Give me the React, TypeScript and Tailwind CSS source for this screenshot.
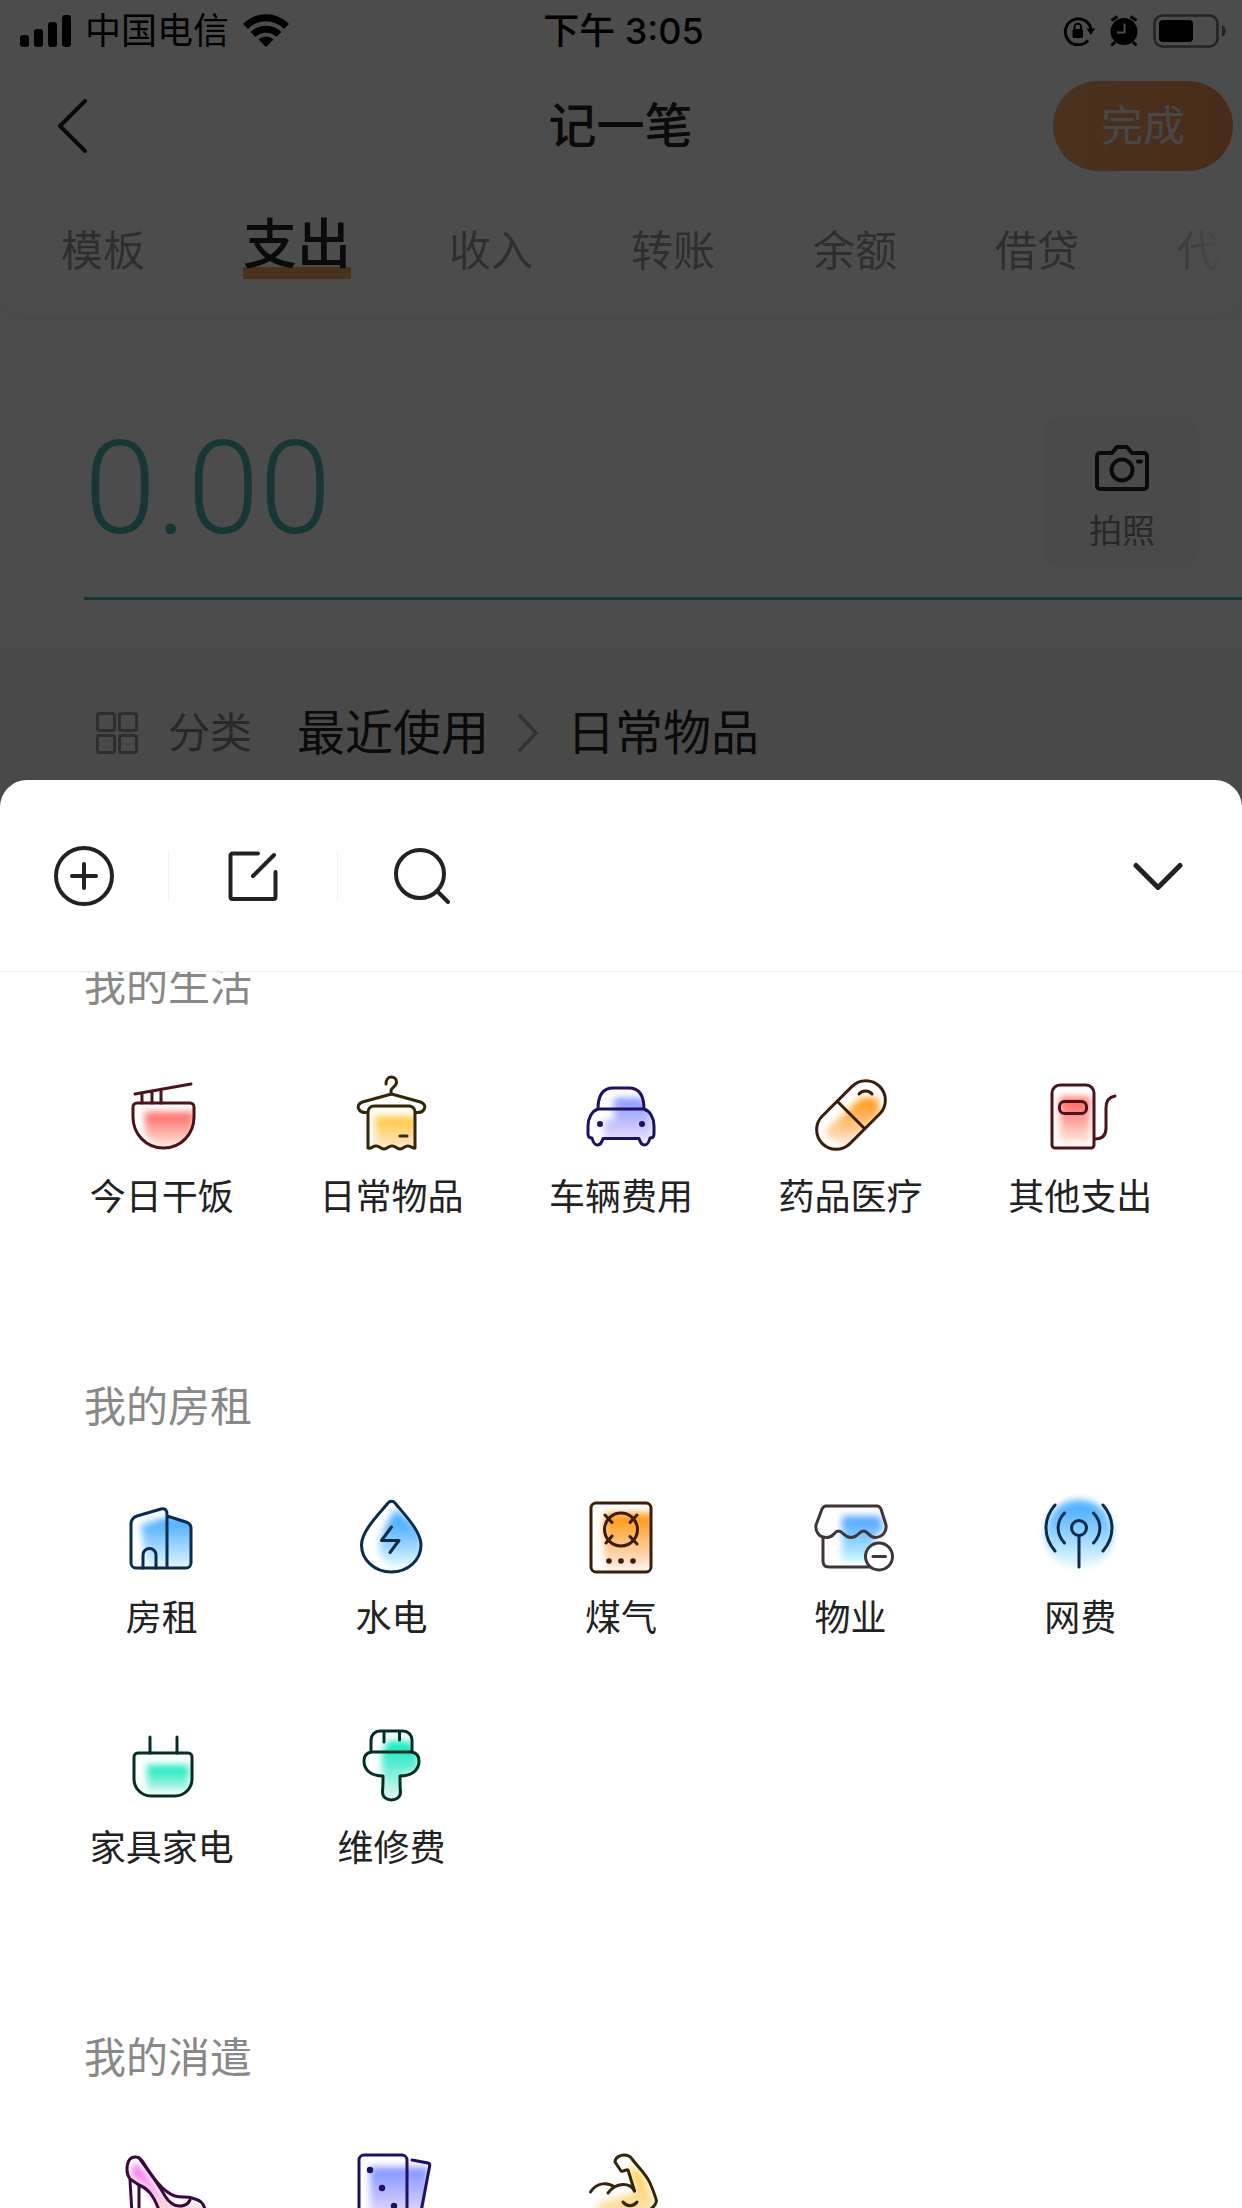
import React, { useId, useState } from 'react';

type Tone = { line: string; from: string; to: string };

const tones: Record<string, Tone> = {
  red: { line: '#4a141c', from: '#ff6f6a', to: '#fff0e2' },
  yellow: { line: '#33260a', from: '#ffcb45', to: '#ffe9d6' },
  violet: { line: '#1f1060', from: '#8496ff', to: '#ecdffd' },
  orange: { line: '#3b1d0c', from: '#ff9c1a', to: '#ffe8dc' },
  blue: { line: '#0c2c4c', from: '#52b1ff', to: '#e4f9ff' },
  shop: { line: '#3f3638', from: '#4da3ff', to: '#c4f6ff' },
  green: { line: '#052f26', from: '#1de9c3', to: '#d2f6f0' },
  pink: { line: '#380a3c', from: '#f56bea', to: '#ffe0dc' },
};

type TintIconProps = {
  tone: keyof typeof tones;
  outline?: React.ReactNode;
  glow: React.ReactNode;
  y1?: number;
  y2?: number;
  children: React.ReactNode;
};

// line icon with a soft colour patch behind the strokes
const TintIcon = ({ tone, outline, glow, y1 = 20, y2 = 80, children }: TintIconProps) => {
  const id = useId();
  const { line, from, to } = tones[tone];
  return (
    <svg viewBox="0 0 90 90" className="size-[90px] overflow-visible" fill="none" aria-hidden="true">
      <defs>
        <linearGradient id={`${id}g`} gradientUnits="userSpaceOnUse" x1="0" y1={y1} x2="0" y2={y2}>
          <stop offset="0" stopColor={from} />
          <stop offset="1" stopColor={to} />
        </linearGradient>
        <filter id={`${id}b`} x="-30%" y="-30%" width="160%" height="160%">
          <feGaussianBlur stdDeviation="3.5" />
        </filter>
        {outline && <clipPath id={`${id}c`}>{outline}</clipPath>}
      </defs>
      <g clipPath={outline ? `url(#${id}c)` : undefined}>
        <g fill={`url(#${id}g)`} filter={`url(#${id}b)`}>
          {glow}
        </g>
      </g>
      <g stroke={line} strokeWidth="3" strokeLinecap="round" strokeLinejoin="round">
        {children}
      </g>
    </svg>
  );
};

const bowl = 'M20 33H73a4 4 0 0 1 4 4v10c0 17-13 31-30.500 31S16 64 16 47V37a4 4 0 0 1 4-4Z';
const BowlIcon = () => (
  <TintIcon tone="red" outline={<path d={bowl} />} y1={46} y2={78} glow={<path d="M28 42H77V62L63 78H41L28 64Z" />}>
    <path d={bowl} />
    <path d="M18 24 74 14M25 23v10M35 21v12M44 19.500v13.500" />
  </TintIcon>
);

const towel =
  'M22 78V42a6 6 0 0 1 6-6H63a6 6 0 0 1 6 6V78c-3 1-3-2-7-2s-5 3-8 3-4-3-8-3-5 3-8 3-4-3-8-3-4 3-8 2Z';
const HangerIcon = () => (
  <TintIcon tone="yellow" outline={<path d={towel} />} y1={50} y2={80} glow={<rect x="29" y="46" width="42" height="36" />}>
    <path d={towel} />
    <path d="M45 24v-3c0-4 5.500-4 5.500-9 0-3-2.200-5-5.200-5S40 9.500 40 14" />
    <path d="M21.500 42.500c-9 1-13-7.500-5-10.500L45.500 24 74.500 32c8 3 4 11.500-5 10.500" />
    <path d="M54 66h7" />
  </TintIcon>
);

const car =
  'M22 39c0-12 4-21 15-21h16c11 0 15 9 15 21 6 2 10 9 10 17v8c0 2-1 4-4 4-1 4-2 7-5.500 7S64 72 63 68.500H27c-1 3.500-2 6.500-5.500 6.500S17 72 16 68c-3 0-4-2-4-4V56c0-8 4-15 10-17Z';
const CarIcon = () => (
  <TintIcon tone="violet" outline={<path d={car} />} y1={28} y2={72} glow={<path d="M38 28H66L76 46V72H28V50H38Z" />}>
    <path d={car} />
    <path d="M22 39H68" />
    <g fill={tones.violet.line} stroke="none">
      <circle cx="24" cy="54" r="3" />
      <circle cx="66" cy="54" r="3" />
    </g>
  </TintIcon>
);

const PillIcon = () => {
  const shell = <rect x="4.500" y="25.500" width="81" height="39" rx="19.500" transform="rotate(-45 45 45)" />;
  return (
    <TintIcon tone="orange" outline={shell} y1={32} y2={76} glow={<path d="M55 28H72L74 44 40 76 22 68 20 60Z" />}>
      {shell}
      <path d="M31.500 31.500 58.500 58.500M53 24c3-4 10-4 13 0" />
    </TintIcon>
  );
};

const pump = 'M25 15H51a8 8 0 0 1 8 8V75a3 3 0 0 1-3 3H20a3 3 0 0 1-3-3V23a8 8 0 0 1 8-8Z';
const PumpIcon = () => (
  <TintIcon tone="red" outline={<path d={pump} />} y1={34} y2={74} glow={<rect x="25" y="27" width="30" height="46" />}>
    <path d={pump} />
    <rect x="24.500" y="31.500" width="27" height="12" rx="5" />
    <path d="M60 69c8 0 11-4 11-11V38c0-7 3-11 9-12" />
  </TintIcon>
);

const building =
  'M50 77V25L69 31c3 1 5 3 5 6V72a5 5 0 0 1-5 5H19a5 5 0 0 1-5-5V33c0-4 2-6.500 6-8L44 18c4-1 6 1 6 5Z';
const BuildingIcon = () => (
  <TintIcon tone="blue" outline={<path d={building} />} y1={32} y2={78} glow={<path d="M24 34 50 26H80V78H30Z" />}>
    <path d="M50 77V23c0-4-2-6-6-5L20 25c-4 1.500-6 4-6 8V72a5 5 0 0 0 5 5H69a5 5 0 0 0 5-5V37c0-3-2-5-5-6L50 25" />
    <path d="M26 77V64a6.500 6.500 0 0 1 13 0V77" />
  </TintIcon>
);

const drop = 'M42 12c2-2.500 5-2.500 7 0C58 23 75 40 75 54c0 15-13 27-29.700 27S15.500 69 15.500 54C15.500 40 33 23 42 12Z';
const DropIcon = () => (
  <TintIcon tone="blue" outline={<path d={drop} />} y1={34} y2={76} glow={<path d="M50 18 76 40V72L46 76C26 66 32 44 50 18Z" />}>
    <path d={drop} />
    <path d="M45.500 36 35.500 49.500H53L44 61.500" />
  </TintIcon>
);

const StoveIcon = () => {
  const body = <rect x="15" y="12" width="60" height="69" rx="5" />;
  return (
    <TintIcon tone="orange" outline={body} y1={28} y2={76} glow={<path d="M30 22H78V68L68 78H28V40Z" />}>
      {body}
      <circle cx="45" cy="38.500" r="16.500" />
      <path d="m29 24 7 7.500M61 24l-7 7.500M30 52l6-7M61 53l-7-7.500" />
      <g fill={tones.orange.line} stroke="none">
        <circle cx="33" cy="70" r="2.800" />
        <circle cx="45" cy="70" r="2.800" />
        <circle cx="57" cy="70" r="2.800" />
      </g>
    </TintIcon>
  );
};

const ShopIcon = () => (
  <TintIcon tone="shop" y1={26} y2={70} glow={<path d="M36 25H74L78 38 70 46 62 70H36Z" />}>
    <path d="M20 15H71c2 0 3 1 4 3l5 16c1 7-4 12.500-11 12.500-6 0-7-6.500-11.500-6.500S52 46.500 45 46.500 37 40 32.500 40 28 46.500 21 46.500c-8 0-12-6-11-12.500l6-16c1-2 2-3 4-3Z" />
    <path d="M17 47V70c0 4 2 6 6 6H64" />
    <circle cx="73" cy="65.500" r="13.500" fill="#fff" />
    <path d="M67 65.500H79.500" />
  </TintIcon>
);

const AntennaIcon = () => (
  <TintIcon tone="blue" y1={18} y2={74} glow={<circle cx="44" cy="43" r="34" />}>
    <circle cx="44" cy="37" r="7.500" />
    <path d="M44 45V76M20 14C8 28 8 46 20 60M29.500 22C21 31 21 43 29.500 52M58.500 22C67 31 67 43 58.500 52M68 14C80 28 80 46 68 60" />
  </TintIcon>
);

const plug = 'M21 32H71a4 4 0 0 1 4 4V58a17 17 0 0 1-17 17H34A17 17 0 0 1 17 58V36a4 4 0 0 1 4-4Z';
const PlugIcon = () => (
  <TintIcon tone="green" outline={<path d={plug} />} y1={48} y2={72} glow={<rect x="30" y="44" width="42" height="26" />}>
    <path d={plug} />
    <path d="M33 16V32M60 16V32" />
  </TintIcon>
);

const brush =
  'M34 10H57a9 9 0 0 1 9 9V31c5 1 7 4 7 9 0 9-7 15-19 15 0 6 0 11 .500 16 0 5-4 8-9 8s-9-3-9-8c.500-5 .500-10 .500-16-12 0-19-6-19-15 0-5 2-8 7-9V19a9 9 0 0 1 9-9Z';
const BrushIcon = () => (
  <TintIcon tone="green" outline={<path d={brush} />} y1={28} y2={74} glow={<path d="M42 20H64L72 34V52H58V78H36V32Z" />}>
    <path d={brush} />
    <path d="M25 31H66M38 11V21M53.500 11v8" />
  </TintIcon>
);

const HeelIcon = () => (
  <TintIcon
    tone="pink"
    y1={24}
    y2={70}
    glow={<path d="M17 20 28 30 44 52 60 64 84 62V82H46L30 46 14 34Z" />}
    outline={<path d="M19 15 26 17 59 53 74 57 88 66V88H48L24 44 12 38 10 26Z" />}
  >
    <path d="M42 68C36 52 30 46 22 43L13 37C8 30 9 14 19 15c3 0 5 2 7 5C36 36 46 50 58 54c6 2 12 0 17 2 8 2 12 5 13 12" />
    <path d="M22 16C32 30 40 40 48 54c5 8 12 12 20 9 3-1 4-3 5-5M13 38l3 50M22 43v45M42 68c3 8 8 16 14 20h26c4 0 6-4 6-10V68" />
  </TintIcon>
);

const CardsIcon = () => (
  <TintIcon
    tone="violet"
    y1={28}
    y2={76}
    outline={<path d="M13 13H61V18L84 22 76 80H13Z" />}
    glow={<rect x="24" y="25" width="58" height="60" />}
  >
    <rect x="13" y="13" width="48" height="70" rx="5" />
    <path d="m66 18 16 3c2 .500 2 2 1.500 4L73 80" />
    <g fill={tones.violet.line} stroke="none">
      <circle cx="24" cy="28" r="3.200" />
      <circle cx="36" cy="46" r="3.200" />
      <circle cx="48" cy="64" r="3.200" />
    </g>
  </TintIcon>
);

const ArmIcon = () => (
  <TintIcon
    tone="yellow"
    y1={24}
    y2={86}
    outline={<path d="M47 13 55 16 74 38 81 60 74 80H14V50L26 42 40 44 58 48 52 29 40 22Z" />}
    glow={<path d="M52 22 66 32 78 58 70 80H16L22 62 60 50Z" />}
  >
    <path d="M58.500 49 52 28c-2-1-4 2-7 1-2-3-4-6-6-9 0-5 6-7 9-7 4 0 6 1 8 4 6 8 14 15 18 24 3 7 5 12 6.500 18-1 5-4 7-7 9" />
    <path d="M58.500 49C54 40 40 40 32 51M38.500 45C32 40 21 40 14.500 50M47 60c4 5 10 5 14 0" />
  </TintIcon>
);

type Category = { name: string; icon: React.FC; hideLabel?: boolean };

const groups: { title: string; items: Category[] }[] = [
  {
    title: '我的生活',
    items: [
      { name: '今日干饭', icon: BowlIcon },
      { name: '日常物品', icon: HangerIcon },
      { name: '车辆费用', icon: CarIcon },
      { name: '药品医疗', icon: PillIcon },
      { name: '其他支出', icon: PumpIcon },
    ],
  },
  {
    title: '我的房租',
    items: [
      { name: '房租', icon: BuildingIcon },
      { name: '水电', icon: DropIcon },
      { name: '煤气', icon: StoveIcon },
      { name: '物业', icon: ShopIcon },
      { name: '网费', icon: AntennaIcon },
      { name: '家具家电', icon: PlugIcon },
      { name: '维修费', icon: BrushIcon },
    ],
  },
  {
    title: '我的消遣',
    items: [
      { name: '鞋子', icon: HeelIcon, hideLabel: true },
      { name: '棋牌', icon: CardsIcon, hideLabel: true },
      { name: '健身', icon: ArmIcon, hideLabel: true },
    ],
  },
];

const tabs = ['模板', '支出', '收入', '转账', '余额', '借贷', '代付'];

const StatusBar = () => (
  <div className="grid h-[60px] grid-cols-3 items-center pt-px pr-[15px] pl-5 text-[36px] leading-[36px] text-black">
    <div className="flex items-center gap-[14px]">
      <svg viewBox="0 0 51 32" className="h-8 w-[51px]" aria-hidden="true">
        <rect x="0" y="20" width="9" height="12" rx="3" />
        <rect x="14" y="14" width="9" height="18" rx="3" />
        <rect x="28" y="7" width="9" height="25" rx="3" />
        <rect x="42" y="0" width="9" height="32" rx="3" />
      </svg>
      <span>中国电信</span>
      <svg viewBox="0 0 46 33" className="h-[33px] w-[46px]" fill="none" stroke="#000" strokeWidth="7" aria-hidden="true">
        <path d="M2.500 12.500C14 .800 32 .800 43.500 12.500M10 20.500c7.500-7 18.500-7 26 0" />
        <path d="M23 33 15.500 25.500c4-4 11-4 15 0Z" fill="#000" stroke="none" />
      </svg>
    </div>
    <div className="text-center font-medium">下午 3:05</div>
    <div className="flex items-center justify-end gap-[15px]">
      <svg viewBox="0 0 32 30" className="h-[30px] w-8" fill="none" aria-hidden="true">
        <path d="M25 24.500A13 13 0 1 1 28 13" stroke="#000" strokeWidth="3" />
        <path d="M23.500 12.500h8.500l-4.200 6.500Z" fill="#000" />
        <rect x="9.500" y="13" width="10.500" height="9" rx="1.500" fill="#000" />
        <path d="M11.500 13v-2a3.300 3.300 0 0 1 6.600 0v2" stroke="#000" strokeWidth="2" />
      </svg>
      <svg viewBox="0 0 28 31" className="h-[31px] w-7" fill="none" stroke="#000" strokeWidth="3" aria-hidden="true">
        <circle cx="14" cy="16.500" r="13.500" fill="#000" stroke="none" />
        <path d="m1.500 5.500 6-4M26.500 5.500l-6-4M5 27l-3.500 3.500M23 27l3.500 3.500" />
        <path d="M14.500 8.500v9H7" stroke="#fff" strokeWidth="2" />
      </svg>
      <svg viewBox="0 0 74 34" className="h-[34px] w-[74px]" aria-hidden="true">
        <rect x="1.500" y="1.500" width="63" height="31" rx="8" fill="none" stroke="#777" strokeWidth="2.500" />
        <rect x="6" y="6" width="34" height="22" rx="4" />
        <path d="M69 11c5 2 5 10 0 12Z" fill="#777" />
      </svg>
    </div>
  </div>
);

const EntryPage = () => {
  const [activeTab, setActiveTab] = useState('支出');
  return (
    <div className="bg-[#fdfdfd]">
      <header className="rounded-b-[24px] bg-white shadow-[0_2px_14px_rgba(0,0,0,0.04)]">
        <StatusBar />
        <div className="grid h-[132px] grid-cols-3 items-center pr-[9px] pl-[57px]">
          <button type="button" aria-label="返回" className="justify-self-start">
            <svg viewBox="0 0 30 54" className="h-[54px] w-[30px]" fill="none" stroke="#222" strokeWidth="4" strokeLinecap="round" strokeLinejoin="round">
              <path d="M28 2 3 27l25 25" />
            </svg>
          </button>
          <h1 className="pr-[49px] text-center text-[48px] leading-[48px] font-medium text-[#222]">记一笔</h1>
          <button
            type="button"
            className="h-[90px] w-[180px] justify-self-end rounded-full bg-linear-to-r from-[#f7aa6b] to-[#f09355] text-[42px] leading-[42px] text-[#eee]"
          >
            完成
          </button>
        </div>
        <nav className="flex h-[123px] items-end gap-[98px] overflow-hidden mask-r-from-92% mask-r-to-99% pb-9 pl-[61px]">
          {tabs.map((tab) =>
            tab === activeTab ? (
              <button
                key={tab}
                type="button"
                className="shrink-0 border-b-12 border-[#f5a45a] text-[54px] leading-[44px] font-medium text-[#222]"
              >
                {tab}
              </button>
            ) : (
              <button
                key={tab}
                type="button"
                onClick={() => setActiveTab(tab)}
                className="shrink-0 pb-[7px] text-[42px] leading-[42px] text-[#999]"
              >
                {tab}
              </button>
            ),
          )}
        </nav>
      </header>
      <div className="pb-[49px] pl-[84px]">
        <div className="flex items-center justify-between border-b-3 border-[#4fb8b6] pt-[101px] pr-[43px] pb-[29px]">
          <input
            aria-label="金额"
            defaultValue="0.00"
            inputMode="decimal"
            className="h-[146px] min-w-0 flex-1 self-start bg-transparent font-[Roboto,sans-serif] text-[130px] leading-[146px] font-light text-[#4fb8b6] outline-none"
          />
          <button type="button" className="flex h-[152px] w-[154px] flex-col items-center justify-center gap-[22px] rounded-[18px] bg-[#f8f8f8] pt-[10px]">
            <svg viewBox="0 0 54 46" className="h-[46px] w-[54px]" fill="none" stroke="#222" strokeWidth="4" strokeLinejoin="round" aria-hidden="true">
              <path d="M5 8H17l5-6H32l5 6H49a3 3 0 0 1 3 3V41a3 3 0 0 1-3 3H5a3 3 0 0 1-3-3V11a3 3 0 0 1 3-3Z" />
              <circle cx="27" cy="25" r="10.500" />
              <path d="M43 16.500h3" strokeLinecap="round" />
            </svg>
            <span className="text-[33px] leading-[36px] text-[#888]">拍照</span>
          </button>
        </div>
      </div>
      <div className="flex h-[168px] items-center bg-[#f5f5f5] pl-24">
        <svg viewBox="0 0 42 42" className="size-[42px]" fill="none" stroke="#999" strokeWidth="3" aria-hidden="true">
          <rect x="1.500" y="1.500" width="17" height="17" rx="2" />
          <rect x="23.500" y="1.500" width="17" height="17" rx="2" />
          <rect x="1.500" y="23.500" width="17" height="17" rx="2" />
          <rect x="23.500" y="23.500" width="17" height="17" rx="2" />
        </svg>
        <span className="ml-[30px] text-[42px] leading-[48px] text-[#888]">分类</span>
        <div className="ml-[45px] flex items-center gap-[29px] text-[48px] leading-[48px] text-[#222]">
          <span>最近使用</span>
          <svg viewBox="0 0 20 38" className="h-[38px] w-5" fill="none" stroke="#aaa" strokeWidth="4" strokeLinecap="round" strokeLinejoin="round" aria-hidden="true">
            <path d="m2 2 16 17L2 36" />
          </svg>
          <span>日常物品</span>
        </div>
      </div>
    </div>
  );
};

const CategorySheet = () => (
  <section className="absolute inset-x-0 top-[780px] bottom-0 flex flex-col overflow-hidden rounded-t-[27px] bg-white">
    <div className="flex h-48 shrink-0 items-center border-b border-[#ebebeb]">
      <button type="button" aria-label="添加分类" className="flex w-[168px] justify-center">
        <svg viewBox="0 0 60 60" className="size-[60px]" fill="none" stroke="#222" strokeWidth="4" strokeLinecap="round">
          <circle cx="30" cy="30" r="28" />
          <path d="M18 30H42M30 18V42" />
        </svg>
      </button>
      <span className="h-[50px] w-px bg-[#f0f0f0]"></span>
      <button type="button" aria-label="编辑分类" className="flex w-[168px] justify-center">
        <svg viewBox="0 0 50 50" className="size-[50px]" fill="none" stroke="#222" strokeWidth="4" strokeLinecap="round" strokeLinejoin="round">
          <path d="M30 2.500H4.500a2 2 0 0 0-2 2V46a2 2 0 0 0 2 2H45.500a2 2 0 0 0 2-2V21M46 4 25 25" />
        </svg>
      </button>
      <span className="h-[50px] w-px bg-[#f0f0f0]"></span>
      <button type="button" aria-label="搜索" className="flex w-[168px] justify-center">
        <svg viewBox="0 0 56 56" className="size-14" fill="none" stroke="#222" strokeWidth="4" strokeLinecap="round">
          <circle cx="26" cy="26" r="24" />
          <path d="M43 43 54 54" />
        </svg>
      </button>
      <button type="button" aria-label="收起" className="ml-auto flex w-[168px] justify-center">
        <svg viewBox="0 0 50 28" className="h-7 w-[50px]" fill="none" stroke="#222" strokeWidth="5" strokeLinecap="round" strokeLinejoin="round">
          <path d="M3 3.500 25 25.500 47 3.500" />
        </svg>
      </button>
    </div>
    <div className="min-h-0 flex-1 overflow-y-auto [scrollbar-width:none]">
      <div className="-mt-[7px] flex flex-col gap-[170px]">
        {groups.map((group) => (
          <div key={group.title}>
            <h2 className="pl-[84px] text-[42px] leading-[42px] text-[#888]">{group.title}</h2>
            <div className="mt-[63px] grid grid-cols-5 gap-y-[84px] px-[47px]">
              {group.items.map(({ name, icon: Icon, hideLabel }) => (
                <button key={name} type="button" aria-label={name} className="flex flex-col items-center gap-[19px] text-[#222]">
                  <Icon />
                  {!hideLabel && <span className="text-[36px] leading-[37px]">{name}</span>}
                </button>
              ))}
            </div>
          </div>
        ))}
      </div>
    </div>
  </section>
);

const App = () => {
  return (
    <main className="relative h-screen overflow-hidden bg-[#f5f5f5] font-[Inter,'Noto_Sans_CJK_SC',sans-serif]">
      <EntryPage />
      <div className="absolute inset-0 bg-black/70"></div>
      <CategorySheet />
    </main>
  );
};

export default App;
